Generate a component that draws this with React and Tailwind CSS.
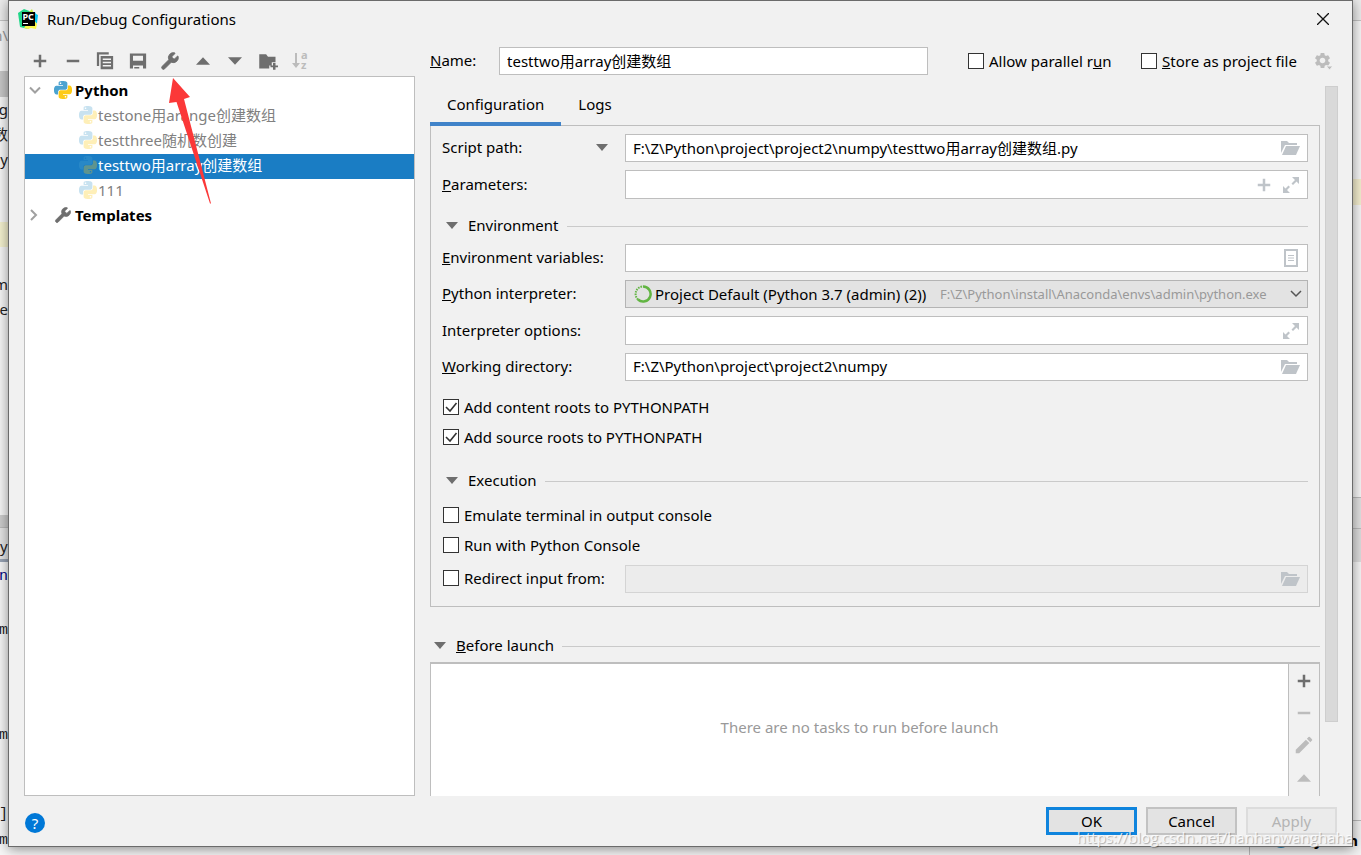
import { useState } from "react";
import clsx from "clsx";
import { Wrench } from "lucide-react";
import { MdEdit, MdSettings } from "react-icons/md";

const LEAF =
  "M14.25.18l.9.2.73.26.59.3.45.32.34.34.25.34.16.33.1.3.04.26.02.2-.01.13V8.5l-.05.63-.13.55-.21.46-.26.38-.3.31-.33.25-.35.19-.35.14-.33.1-.3.07-.26.04-.21.02H8.77l-.69.05-.59.14-.5.22-.41.27-.33.32-.27.35-.2.36-.15.37-.1.35-.07.32-.04.27-.02.21v3.06H3.17l-.21-.03-.28-.07-.32-.12-.35-.18-.36-.26-.36-.36-.35-.46-.32-.59-.28-.73-.21-.88-.14-1.05-.05-1.23.06-1.22.16-1.04.24-.87.32-.71.36-.57.4-.44.42-.33.42-.24.4-.16.36-.1.32-.05.24-.01h.16l.06.01h8.16v-.83H6.18l-.01-2.75-.02-.37.05-.34.11-.31.17-.28.25-.26.31-.23.38-.2.44-.18.51-.15.58-.12.64-.1.71-.06.77-.04.84-.02 1.27.05zm-6.3 1.98l-.23.33-.08.41.08.41.23.34.33.22.41.09.41-.09.33-.22.23-.34.08-.41-.08-.41-.23-.33-.33-.22-.41-.09-.41.09z";

const PythonIcon = ({ className }) => (
  <svg viewBox="0 0 24 24" className={clsx("size-[18px] shrink-0", className)}>
    <path d={LEAF} fill="#4ba3d1" />
    <path d={LEAF} fill="#fdcb16" transform="rotate(180 12 12)" />
  </svg>
);

const PyCharmIcon = () => (
  <svg viewBox="0 0 20 20" className="size-5 shrink-0">
    <path d="M0 4 6 0l8 3 2 12-6 5-8-2z" fill="#21d789" />
    <path d="M14 4l3-1 1 2 2 1-1 8-4 3-6-3z" fill="#07c3f2" />
    <path d="M6 19l8-11 5 7-1 5-5-1-3 1z" fill="#fcf84a" />
    <path d="M11 3l3-3 2 5-2 2z" fill="#c8ee3a" />
    <rect x="4" y="3" width="13" height="14" />
    <rect x="5" y="14" width="5" height="1" fill="#fff" />
    <text x="4.5" y="11" fontSize="9" fontWeight="700" fill="#fff">
      PC
    </text>
  </svg>
);

/* 16 unit glyphs, drawn at 20px */
const paths = {
  add: "M9 7h4v2H9v4H7V9H3V7h4V3h2z",
  remove: "M3 7h10v2H3z",
  copy: "M1.500 1h9.500v1.800H3.300V12H1.500zM4.500 4h10v10.500h-10zM6.200 6v1.200h6.600V6zM6.200 8.600v1.200h6.600V8.600zM6.200 11.200v1.200h6.600v-1.200z",
  save: "M1.500 2h13v12H12v-2.500H4V14H1.500zM4 3.700v4h8v-4zM5 12.700h4V14H5z",
  up: "M2.400 11 8 5l5.600 6z",
  down: "M2.400 5h11.200L8 11z",
  folder: "M1 2.500h5.500l1.500 2h6v4.500h-3v2.500H9V14H1zM12 9.500h2v2h2v1.500h-2V15h-2v-2h-2v-1.500h2z",
};

const Glyph = ({ name, className }) => (
  <svg viewBox="0 0 16 16" className={clsx("size-5 shrink-0", className)}>
    <path d={paths[name]} fill="currentColor" fillRule="evenodd" />
  </svg>
);

const SortIcon = () => (
  <svg viewBox="0 0 20 20" className="size-5 text-[#bcbcbc]">
    <path d="M5 2h2v10h3l-4 5-4-5h3z" fill="currentColor" />
    <text x="11" y="8" fontSize="11" fontWeight="700" fill="currentColor">
      a
    </text>
    <text x="11" y="18" fontSize="11" fontWeight="700" fill="currentColor">
      z
    </text>
  </svg>
);

const Triangle = ({ className }) => (
  <svg viewBox="0 0 12 8" className={clsx("h-2 w-3 shrink-0", className)}>
    <path d="M0 1h12L6 8z" fill="#6e6e6e" />
  </svg>
);

const FolderOpenIcon = () => (
  <svg viewBox="0 0 19 14" className="h-[14px] w-[19px]" fill="currentColor">
    <path d="M0 0h6l2 2h8v2H4L0 12z" />
    <path d="M5 5h14l-4 9H1z" />
  </svg>
);

const ExpandIcon = () => (
  <svg viewBox="0 0 18 18" className="size-[18px]" fill="currentColor">
    <path d="M10 1h7v7l-2.500-2.500-3.500 3.500-1.500-1.500 3.500-3.500z" />
    <path d="M8 17H1v-7l2.500 2.500 3-3L8 11l-3 3z" />
  </svg>
);

const ListIcon = () => (
  <svg viewBox="0 0 18 18" className="size-[18px]" fill="none" stroke="currentColor">
    <rect x="3" y="1" width="12" height="16" strokeWidth="2" />
    <path d="M6 6.500h6M6 9h6M6 11.500h6" />
  </svg>
);

const Chevron = ({ open }) => (
  <svg viewBox="0 0 12 12" className="size-3 shrink-0" fill="none" stroke="#a0a0a0" strokeWidth="2">
    <path d={open ? "M1 3.500l5 5 5-5" : "M2 1l5 5-5 5"} />
  </svg>
);

const IconButton = ({ label, disabled, className, children }) => (
  <button
    type="button"
    aria-label={label}
    disabled={disabled}
    className={clsx("flex items-center justify-center", disabled ? "text-[#bcbcbc]" : "text-[#6e6e6e]", className)}
  >
    {children}
  </button>
);

const Check = ({ id, checked = false, className, children }) => {
  const [on, setOn] = useState(checked);
  return (
    <label htmlFor={id} className={clsx("flex items-center gap-[5px] whitespace-nowrap", className)}>
      <span className="grid">
        <input
          id={id}
          type="checkbox"
          checked={on}
          onChange={(e) => setOn(e.target.checked)}
          className="peer col-start-1 row-start-1 size-4 appearance-none border border-[#333] bg-white"
        />
        <svg
          viewBox="0 0 16 16"
          className="pointer-events-none col-start-1 row-start-1 hidden size-4 peer-checked:block"
          fill="none"
          stroke="#333"
          strokeWidth="1.600"
        >
          <path d="M3 8l4 4 6.500-8" />
        </svg>
      </span>
      <span>{children}</span>
    </label>
  );
};

const Field = ({ id, value = "", disabled, tall, label, children }) => (
  <div
    className={clsx(
      "flex min-w-0 flex-1 items-center gap-2 border pr-[7px] text-[#bfc4c9]",
      tall ? "h-[29px]" : "h-7",
      disabled ? "border-[#d4d4d4] bg-[#ececec]" : "border-[#bebebe] bg-white"
    )}
  >
    <input
      id={id}
      type="text"
      aria-label={label}
      defaultValue={value}
      disabled={disabled}
      className="h-full min-w-0 flex-1 bg-transparent pb-0.5 pl-[7px] text-black outline-none"
    />
    {children}
  </div>
);

const Row = ({ id, label, className, arrow, children }) => (
  <div className={clsx("flex items-center", className)}>
    <label htmlFor={id} className="flex w-[183px] shrink-0 items-center justify-between pr-[17px] pb-0.5">
      <span className="whitespace-nowrap">{label}</span>
      {arrow && <Triangle />}
    </label>
    {children}
  </div>
);

const Section = ({ title, className }) => (
  <div className={clsx("flex h-7 items-center", className)}>
    <button type="button" className="flex items-center gap-[10px] pb-0.5">
      <Triangle />
      <span>{title}</span>
    </button>
    <div className="ml-2 h-px flex-1 bg-[#cacaca]" />
  </div>
);

const configs = [
  { name: "testone用arange创建数组" },
  { name: "testthree随机数创建" },
  { name: "testtwo用array创建数组" },
  { name: "111" },
];

const Sidebar = () => {
  const [selected, setSelected] = useState(2);

  return (
    <div className="flex w-[391px] shrink-0 flex-col">
      <div className="flex h-[30px] items-center justify-between pr-[105px] pl-[6px]">
        <IconButton label="Add"><Glyph name="add" /></IconButton>
        <IconButton label="Remove"><Glyph name="remove" /></IconButton>
        <IconButton label="Copy"><Glyph name="copy" /></IconButton>
        <IconButton label="Save"><Glyph name="save" /></IconButton>
        <IconButton label="Edit templates">
          <Wrench size={20} fill="currentColor" strokeWidth={1} />
        </IconButton>
        <IconButton label="Move up"><Glyph name="up" /></IconButton>
        <IconButton label="Move down"><Glyph name="down" /></IconButton>
        <IconButton label="New folder"><Glyph name="folder" /></IconButton>
        <IconButton label="Sort" disabled><SortIcon /></IconButton>
      </div>

      <ul className="flex-1 border border-[#bebebe] bg-white pt-0.5">
        <li className="flex h-[25px] items-center pb-[3px] pl-1 font-bold">
          <Chevron open />
          <PythonIcon className="mr-[3px] ml-[13px]" />
          Python
        </li>
        {configs.map(({ name }, i) => (
          <li key={name}>
            <button
              type="button"
              onClick={() => setSelected(i)}
              className={clsx(
                "flex h-[25px] w-full items-center gap-px pb-[3px] pl-[54px]",
                selected === i ? "bg-[#1a7dc4] text-white" : "text-[#808080]"
              )}
            >
              <PythonIcon className="opacity-30" />
              {name}
            </button>
          </li>
        ))}
        <li className="flex h-[25px] items-center pb-[3px] pl-1 font-bold">
          <Chevron />
          <Wrench size={18} fill="#6e6e6e" stroke="#6e6e6e" strokeWidth={1} className="mr-[3px] ml-[13px]" />
          Templates
        </li>
      </ul>
    </div>
  );
};

const ConfigurationPanel = () => (
  <div className="-mt-px border border-[#bebebe] pt-2 pr-[11px] pb-[13px] pl-[11px]">
    <Row id="script" label="Script path:" arrow>
      <Field id="script" value="F:\Z\Python\project\project2\numpy\testtwo用array创建数组.py">
        <button type="button" aria-label="Browse script"><FolderOpenIcon /></button>
      </Field>
    </Row>
    <Row id="params" label={<><u>P</u>arameters:</>} className="mt-2">
      <Field id="params" tall>
        <button type="button" aria-label="Insert macro"><Glyph name="add" /></button>
        <button type="button" aria-label="Expand parameters"><ExpandIcon /></button>
      </Field>
    </Row>

    <Section title="Environment" className="mt-[13px] mb-1 pl-1" />
    <Row id="envs" label={<><u>E</u>nvironment variables:</>}>
      <Field id="envs">
        <button type="button" aria-label="Edit variables"><ListIcon /></button>
      </Field>
    </Row>
    <Row id="interpreter" label={<><u>P</u>ython interpreter:</>} className="mt-2">
      <div className="flex h-7 min-w-0 flex-1 items-center border border-[#b4b4b4] bg-[#e3e3e3] pr-[5px] pl-2">
        <svg viewBox="0 0 18 18" className="size-[18px] shrink-0" fill="none" stroke="#62b543">
          <path d="M9 1.500a7.500 7.500 0 1 1-5 13" strokeWidth="2.500" />
          <path d="M4 14.500A7.500 7.500 0 0 1 9 1.500" strokeWidth="2" strokeDasharray="1.500 1" />
        </svg>
        <select id="interpreter" className="ml-[3px] w-[285px] shrink-0 appearance-none bg-transparent">
          <option>Project Default (Python 3.7 (admin) (2))</option>
        </select>
        <span className="min-w-0 flex-1 truncate text-[13px] text-[#999]">
          F:\Z\Python\install\Anaconda\envs\admin\python.exe
        </span>
        <svg viewBox="0 0 12 8" className="h-2 w-3 shrink-0" fill="none" stroke="#555" strokeWidth="1.500">
          <path d="M1 1l5 5 5-5" />
        </svg>
      </div>
    </Row>
    <Row id="options" label="Interpreter options:" className="mt-2">
      <Field id="options" tall>
        <button type="button" aria-label="Expand options"><ExpandIcon /></button>
      </Field>
    </Row>
    <Row id="workdir" label={<><u>W</u>orking directory:</>} className="mt-2">
      <Field id="workdir" value="F:\Z\Python\project\project2\numpy">
        <button type="button" aria-label="Browse directory"><FolderOpenIcon /></button>
      </Field>
    </Row>

    <div className="mt-[11px] pl-px">
      <Check id="content" checked className="h-[30px]">Add content roots to PYTHONPATH</Check>
      <Check id="source" checked className="h-[30px]">Add source roots to PYTHONPATH</Check>
    </div>

    <Section title="Execution" className="mt-[15px] mb-[5px] pl-1" />
    <div className="pl-px">
      <Check id="emulate" className="h-[30px]">Emulate terminal in output console</Check>
      <Check id="console" className="h-[30px]">Run with Python Console</Check>
    </div>
    <div className="mt-[5px] flex items-center pl-px">
      <Check id="redirect" className="w-[182px] shrink-0 pb-0.5">Redirect input from:</Check>
      <Field label="Input file" disabled><FolderOpenIcon /></Field>
    </div>
  </div>
);

const BeforeLaunch = () => (
  <>
    <Section title={<><u>B</u>efore launch</>} className="mt-[25px] mb-0.5 pl-1" />
    <div className="flex flex-1 border-x border-t-2 border-[#bebebe]">
      <div className="flex flex-1 items-center justify-center bg-white pb-[6px] text-[#999]">
        There are no tasks to run before launch
      </div>
      <div className="flex w-[31px] flex-col border-l border-[#bebebe]">
        <IconButton label="Add task" className="h-[33px]"><Glyph name="add" /></IconButton>
        <IconButton label="Remove task" disabled className="h-8"><Glyph name="remove" /></IconButton>
        <IconButton label="Edit task" disabled className="h-8"><MdEdit size={22} /></IconButton>
        <IconButton label="Move task up" disabled className="h-[33px]"><Glyph name="up" /></IconButton>
      </div>
    </div>
  </>
);

const Main = () => {
  const [tab, setTab] = useState("Configuration");

  return (
    <div className="ml-[15px] flex min-w-0 flex-1 flex-col pr-[14px]">
      <div className="flex h-[30px] items-center pr-1">
        <label htmlFor="name" className="w-[69px] shrink-0 pb-0.5"><u>N</u>ame:</label>
        <Field id="name" value="testtwo用array创建数组" />
        <Check id="parallel" className="ml-10 w-[173px] shrink-0">Allow parallel r<u>u</u>n</Check>
        <Check id="store" className="w-[172px] shrink-0"><u>S</u>tore as project file</Check>
        <button type="button" aria-label="Storage options" className="text-[#bcbcbc]">
          <svg viewBox="0 0 21 20" className="h-5 w-[21px]" fill="currentColor">
            <MdSettings size={19} />
            <path d="M13 15h7l-3.500 4z" stroke="#f1f1f1" />
          </svg>
        </button>
      </div>

      <div className="mt-[10px] flex flex-1 gap-[5px]">
        <div className="flex min-w-0 flex-1 flex-col">
          <div role="tablist" className="relative z-10 flex h-10">
            {["Configuration", "Logs"].map((name) => (
              <button
                key={name}
                type="button"
                role="tab"
                aria-selected={tab === name}
                onClick={() => setTab(name)}
                className={clsx("border-b-4 px-[17px]", tab === name ? "border-[#4083c9]" : "border-transparent")}
              >
                {name}
              </button>
            ))}
          </div>
          <ConfigurationPanel />
          <BeforeLaunch />
        </div>
        <div className="mb-[74px] w-[13px] border border-[#cecece] bg-[#d9d9d9]" />
      </div>
    </div>
  );
};

/* editor window behind the dialog, only its edges stay visible */
const Backdrop = () => (
  <div className="absolute inset-0 flex justify-between overflow-hidden bg-[#f7f7f7]" aria-hidden="true">
    <div className="flex w-2 flex-col items-end overflow-hidden whitespace-nowrap leading-6 text-[#222]">
      <div className="h-[21px] w-full shrink-0 border-b border-[#c4c4c4] bg-[#ececec]" />
      <div className="h-[50px] shrink-0 pt-0.5 text-[#999]">n\</div>
      <div className="h-[26px] w-full shrink-0 bg-[#c8c8c8]" />
      <div className="h-[25px] shrink-0">ng</div>
      <div className="h-[25px] shrink-0">数</div>
      <div className="h-[75px] shrink-0">y</div>
      <div className="h-[25px] w-full shrink-0 bg-[#f5f2cf]" />
      <div className="mt-[25px] h-[25px] shrink-0">m</div>
      <div className="h-[218px] shrink-0">le</div>
      <div className="h-[13px] w-full shrink-0 border-b border-[#bbb] bg-[#cdcdcd]" />
      <div className="h-[31px] w-full shrink-0 bg-[#e6e6e6] pt-[6px]">y</div>
      <div className="h-[3px] w-full shrink-0 bg-[#99a4b5]" />
      <div className="mt-[3px] h-[54px] shrink-0 font-mono text-[#000080]">n</div>
      <div className="h-[105px] shrink-0 font-mono">m</div>
      <div className="h-[79px] shrink-0 font-mono">m</div>
      <div className="h-[26px] shrink-0 font-mono">]</div>
      <div className="h-[26px] shrink-0 font-mono">m</div>
    </div>
    <div className="flex w-2 flex-col">
      <div className="h-[21px] border-b border-[#c4c4c4] bg-[#ececec]" />
      <div className="mt-[158px] h-[26px] bg-[#f5efcf]" />
      <div className="mt-[292px] h-[32px] border-y border-[#bbb] bg-[#e2e2e2]" />
      <div className="h-[33px] bg-[#dedede]" />
    </div>
    <div className="absolute right-0 bottom-0 flex h-[35px] w-28 items-center justify-end gap-4 overflow-hidden border-t border-l border-[#bbb] bg-[#f2f2f2] pt-1 pr-[3px] font-bold">
      <span className="size-4 rounded-full bg-[#2a8fc7]" />
      Python
    </div>
  </div>
);

const App = () => (
  <div className="relative flex min-h-screen px-2 pb-2 font-['Noto_Sans','Noto_Sans_CJK_SC',sans-serif] text-[15px] leading-5 text-black">
    <Backdrop />
    <div
      role="dialog"
      aria-labelledby="title"
      className="relative flex flex-1 flex-col border border-[#6b6b6b] bg-[#f1f1f1] shadow-[0_2px_12px_rgba(0,0,0,0.45)]"
    >
      <header className="flex h-[45px] items-center pr-[23px] pb-[9px] pl-[9px]">
        <PyCharmIcon />
        <h1 id="title" className="ml-[9px] flex-1">Run/Debug Configurations</h1>
        <button type="button" aria-label="Close">
          <svg viewBox="0 0 12 12" className="size-3" stroke="#111" strokeWidth="1.300">
            <path d="M0 0l12 12M12 0L0 12" />
          </svg>
        </button>
      </header>

      <div className="flex flex-1 pl-[15px]">
        <Sidebar />
        <Main />
      </div>

      <footer className="flex h-[50px] items-center gap-[9px] pr-[15px] pl-4">
        <button type="button" aria-label="Help" className="mt-[3px] size-5 rounded-full bg-[#0078d7] text-white">
          ?
        </button>
        <button type="button" className="ml-auto h-7 w-[91px] border-[3px] border-[#0f84dd] bg-[#e3e3e3]">OK</button>
        <button type="button" className="h-7 w-[91px] border-2 border-[#c2c2c2] bg-[#e3e3e3]">Cancel</button>
        <button type="button" disabled className="h-7 w-[91px] border-2 border-[#dcdcdc] bg-[#ebebeb] text-[#b4b4b4]">
          Apply
        </button>
      </footer>

      {/* pointer to the templates button */}
      <svg viewBox="168 78 44 126" className="pointer-events-none absolute top-[77px] left-[159px] h-[126px] w-11">
        <path d="M173 78l17 19-6 2 27 104.500-1 0L176.500 102l-7.500 1z" fill="#fb3838" />
      </svg>
    </div>
    <span className="pointer-events-none absolute right-2 bottom-2 font-['Open_Sans',sans-serif] text-white/80 [text-shadow:1px_1px_1px_rgba(0,0,0,0.3)]">
      https://blog.csdn.net/hanhanwanghaha
    </span>
  </div>
);

export default App;
